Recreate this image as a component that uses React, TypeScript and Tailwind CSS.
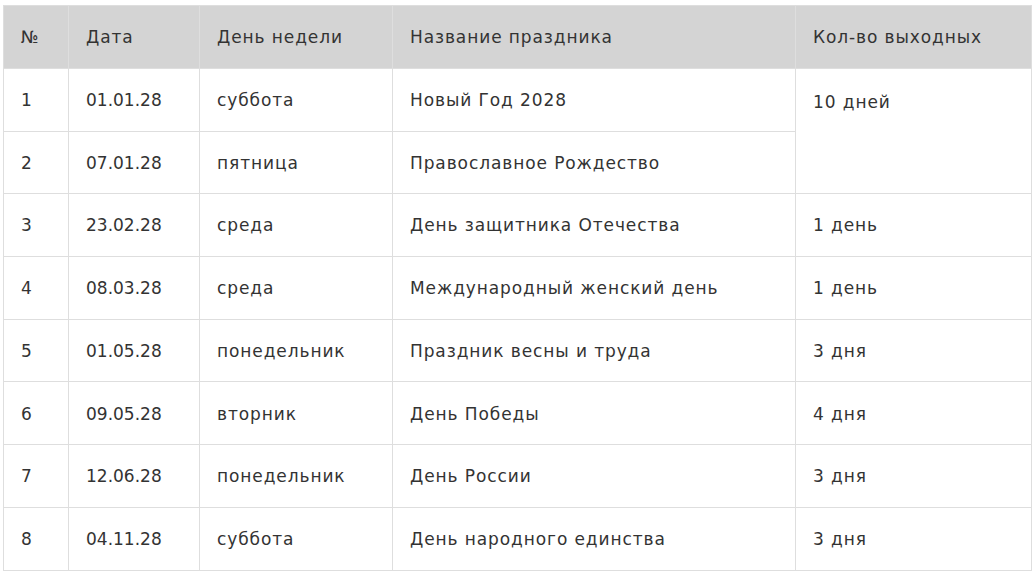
import React from "react";

const rows = [
  ["1", "01.01.28", "суббота", "Новый Год 2028"],
  ["2", "07.01.28", "пятница", "Православное Рождество"],
  ["3", "23.02.28", "среда", "День защитника Отечества", "1 день"],
  ["4", "08.03.28", "среда", "Международный женский день", "1 день"],
  ["5", "01.05.28", "понедельник", "Праздник весны и труда", "3 дня"],
  ["6", "09.05.28", "вторник", "День Победы", "4 дня"],
  ["7", "12.06.28", "понедельник", "День России", "3 дня"],
  ["8", "04.11.28", "суббота", "День народного единства", "3 дня"],
];

export default function App() {
  const td = "border border-[#dedede] px-[17px] pt-[2px] align-middle";
  return (
    <div className="w-[1032px] h-[572px] bg-white pt-[5px] pl-[3px]" style={{ fontFamily: '"DejaVu Sans", "Noto Sans", sans-serif' }}>
      <table className="border-collapse table-fixed w-[1028px] text-[17px] tracking-[0.9px] text-[#333333]">
        <colgroup>
          <col className="w-[65px]" />
          <col className="w-[131px]" />
          <col className="w-[193px]" />
          <col className="w-[403px]" />
          <col className="w-[236px]" />
        </colgroup>
        <thead>
          <tr className="h-[63px] bg-[#d4d4d4] text-left">
            <th className={`${td} font-normal`}>№</th>
            <th className={`${td} font-normal`}>Дата</th>
            <th className={`${td} font-normal`}>День недели</th>
            <th className={`${td} font-normal`}>Название праздника</th>
            <th className={`${td} font-normal`}>Кол-во выходных</th>
          </tr>
        </thead>
        <tbody>
          {rows.map((r, i) => (
            <tr key={i} className="h-[62.7px]">
              <td className={td}>{r[0]}</td>
              <td className={`${td} tracking-[0px]`}>{r[1]}</td>
              <td className={td}>{r[2]}</td>
              <td className={td}>{r[3]}</td>
              {i === 0 ? (
                <td rowSpan={2} className="border border-[#dedede] px-[17px] align-top pt-[21px]">10 дней</td>
              ) : i === 1 ? null : (
                <td className={td}>{r[4]}</td>
              )}
            </tr>
          ))}
        </tbody>
      </table>
    </div>
  );
}
